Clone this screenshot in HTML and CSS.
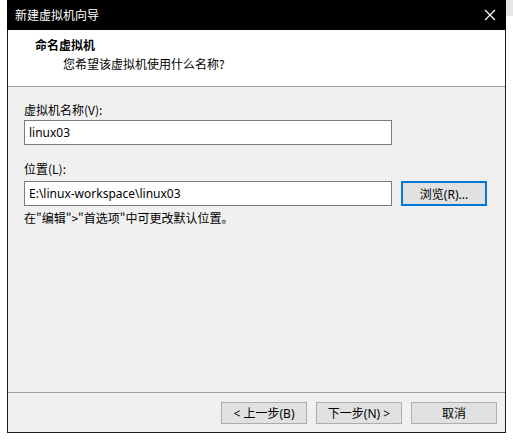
FILE: index.html
```html
<!DOCTYPE html>
<html lang="zh-CN">
<head>
<meta charset="utf-8">
<title>新建虚拟机向导</title>
<link rel="stylesheet" href="styles.css">
</head>
<body>
<div class="desk">
  <div class="window">
    <div class="titlebar">
      <span class="title">新建虚拟机向导</span>
      <span class="close">
        <svg width="12" height="12" viewBox="0 0 12 12"><path d="M1 1 L11 11 M11 1 L1 11" stroke="#fff" stroke-width="1.2" fill="none"/></svg>
      </span>
    </div>
    <div class="header">
      <div class="h-title">命名虚拟机</div>
      <div class="h-sub">您希望该虚拟机使用什么名称?</div>
    </div>
    <div class="content">
      <div class="label">虚拟机名称(V):</div>
      <div class="field name-field">linux03</div>
      <div class="label label-loc">位置(L):</div>
      <div class="loc-row">
        <div class="field loc-field">E:\linux-workspace\linux03</div>
        <div class="btn btn-focus">浏览(R)...</div>
      </div>
      <div class="hint">在"编辑"&gt;"首选项"中可更改默认位置。</div>
    </div>
    <div class="footer">
      <div class="btn">&lt; 上一步(B)</div>
      <div class="btn">下一步(N) &gt;</div>
      <div class="btn">取消</div>
    </div>
  </div>
  <div class="strip"></div>
</div>
</body>
</html>
```
FILE: styles.css
```css
html, body {
  margin: 0;
  padding: 0;
  background: #ffffff;
}
body {
  font-family: "Noto Sans", "Noto Sans CJK SC", sans-serif;
  font-size: 12px;
  color: #000;
}
.desk {
  display: flex;
  align-items: flex-start;
  padding-left: 7px;
}
.window {
  width: 499px;
  height: 433px;
  box-sizing: border-box;
  border: 1px solid #1a1a1a;
  border-top: none;
  background: #f0f0f0;
  display: flex;
  flex-direction: column;
}
.strip {
  width: 7px;
  height: 16px;
  background: #e6e6e6;
}
.titlebar {
  height: 30px;
  background: #000;
  color: #fff;
  display: flex;
  align-items: center;
  justify-content: space-between;
  padding: 0 10px 0 8px;
  margin: 0 -1px;
  flex-shrink: 0;
}
.title {
  font-family: "Noto Sans CJK SC", sans-serif;
  font-size: 12px;
  line-height: 16px;
}
.close {
  display: flex;
  width: 12px;
  height: 12px;
}
.header {
  height: 57px;
  background: #fff;
  border-bottom: 1px solid #a0a0a0;
  box-sizing: border-box;
  flex-shrink: 0;
  padding-top: 7px;
}
.h-title {
  font-family: "Noto Sans CJK SC", sans-serif;
  font-weight: bold;
  font-size: 12px;
  line-height: 16px;
  padding-left: 27px;
}
.h-sub {
  font-family: "Noto Sans CJK SC", sans-serif;
  font-size: 12px;
  line-height: 16px;
  padding-left: 55px;
  margin-top: 3px;
}
.content {
  flex: 1;
  padding: 15px 0 0 16px;
  border-bottom: 1px solid #a0a0a0;
}
.label {
  line-height: 16px;
  font-family: "Noto Sans CJK SC", sans-serif;
}
.field {
  background: #fff;
  border: 1px solid #7a7a7a;
  box-sizing: border-box;
  height: 25px;
  width: 368px;
  display: flex;
  align-items: center;
  padding-left: 4px;
  font-family: "Noto Sans", "Noto Sans CJK SC", sans-serif;
  font-size: 12px;
  color: #000;
}
.name-field {
  margin-top: 2px;
}
.label-loc {
  margin-top: 16px;
}
.loc-row {
  display: flex;
  align-items: center;
  margin-top: 4px;
  gap: 9px;
}
.hint {
  margin-top: 4px;
  line-height: 16px;
  font-family: "Noto Sans CJK SC", sans-serif;
}
.btn {
  width: 86px;
  height: 22px;
  box-sizing: border-box;
  background: #e1e1e1;
  border: 1px solid #adadad;
  display: flex;
  align-items: center;
  justify-content: center;
  font-family: "Noto Sans", "Noto Sans CJK SC", sans-serif;
  font-size: 12px;
  color: #000;
}
.btn-focus {
  height: 25px;
  border: 2px solid #0078d7;
}
.footer {
  height: 39px;
  flex-shrink: 0;
  display: flex;
  justify-content: flex-end;
  align-items: flex-start;
  padding: 9px 8px 0 0;
  box-sizing: border-box;
  gap: 9px;
}
```
